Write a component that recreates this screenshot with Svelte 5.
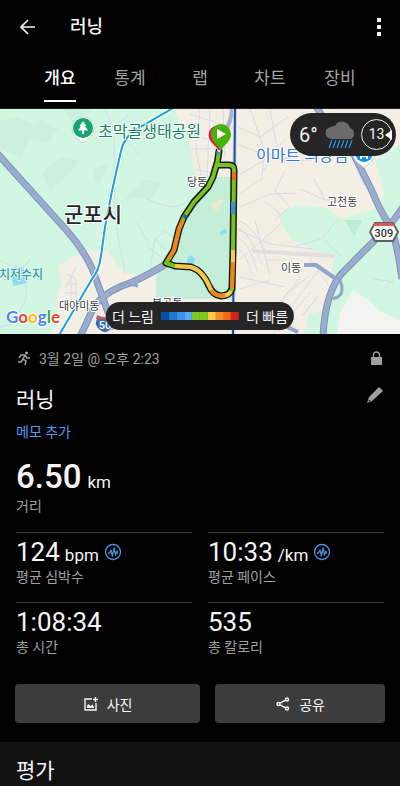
<script lang="ts">
    const tabs = ["개요", "통계", "랩", "차트", "장비"];
    let activeTab = $state("개요");

    const paceScale = [
        "#0a4ea2",
        "#1f78d6",
        "#3b93ee",
        "#59a9fb",
        "#7dc81f",
        "#7dc81f",
        "#fbc94b",
        "#f98b27",
        "#ee6b11",
        "#d32222",
    ];

    const stats = [
        { value: "124", unit: "bpm", label: "평균 심박수", insight: true },
        { value: "10:33", unit: "/km", label: "평균 페이스", insight: true },
        { value: "1:08:34", unit: "", label: "총 시간", insight: false },
        { value: "535", unit: "", label: "총 칼로리", insight: false },
    ];

    const route =
        "M219 42 L217 56 H229 Q234 56 234 61 L233 140 L232 180 Q229 187 221 187 Q213 186 209 177 Q203 162 191 158 L175 157 L166 154 L174 141 L179 120 L184 108 L194 93 L208 78 L213 68 L217 54";

    // Stretches of the route that were run faster or slower than average.
    const paceSegments = [
        { d: "M234 63 V71", color: "#ee6b11" },
        { d: "M233 93 V105", color: "#3b8be0" },
        { d: "M233 141 V153", color: "#fbc94b" },
        { d: "M233 153 L232 179", color: "#f5821f" },
        { d: "M231 182 Q229 187 221 187", color: "#fbc94b" },
        { d: "M225 186 Q215 188 211 181", color: "#f5821f" },
        { d: "M211 181 Q204 162 191 158 L175 157", color: "#fbc151" },
        { d: "M169 150 L174 141 L179 120 L183 111", color: "#f5821f" },
        { d: "M184 109 L186 106", color: "#1f5fa8" },
        { d: "M219 41 L218 45", color: "#3b8be0" },
    ];

    const highways = [
        "M-4 43 L60 114 Q88 144 96 170 L114 220",
        "M166 155 Q140 171 122 177 Q100 186 92 202 L80 228",
        "M315 -4 L328 16 L352 42 L372 82 Q380 102 390 117 Q397 132 402 170",
        "M404 97 L390 116 Q376 130 366 140 L342 164 Q325 184 323 228",
    ];

    const streets = [
        "M105 0 L113 18 L128 7 M113 18 L122 27 L140 46 M114 22 L115 110 L125 165",
        "M0 152 L22 160 L30 150 M25 160 L26 190 L18 205 L5 214 M76 158 L66 178 M67 165 L76 170 L76 198 M71 165 V198 M66 175 H77 M65 184 H78",
        "M190 5 L235 20 M185 25 L230 35 M190 40 H216 M195 60 L212 64 M197 73 L211 76 M200 0 L196 42 L205 84 M210 0 L207 68 M223 0 L225 48",
        "M142 86 L154 94 L174 98 L186 94 M150 160 L155 130 L165 122 L175 130 M148 138 L164 150 M154 129 L167 143 M136 113 L150 136",
        "M238 18 L260 28 L288 8 M238 35 L270 48 L310 52 L326 43 M250 0 L264 40 L262 70 L240 84 M270 0 L278 45 M240 65 L263 52 L286 30 M240 98 L270 85 L297 84",
        "M285 62 L275 81 L290 98 L274 112 M237 120 L270 135 L312 140 M240 150 L264 130 L282 113 M255 112 L270 165 M240 168 L285 178 M239 205 L280 222",
        "M300 80 L325 91 L350 89 M314 70 L325 91 M265 92 L280 105 M270 51 L262 64 M338 111 L321 130 L296 137 M323 130 L341 147 M374 170 L393 173 M383 181 L396 168",
        "M291 150 L300 169 L277 198 M268 221 L286 185 L309 167 M273 225 L311 183 M290 199 L321 158 M302 207 L319 186 M309 149 L330 178 M266 151 H286",
        "M239 112 Q252 115 267 145 M239 120 Q250 124 262 155 M239 130 Q250 135 257 162 M239 140 Q246 145 252 165 M239 180 L270 171",
    ];
</script>

<div class="screen">
    <header>
        <button class="icon-button" aria-label="뒤로">
            <svg width="18" height="18" viewBox="0 0 18 18">
                <path
                    d="M10 2 3 9l7 7M3 9H17"
                    fill="none"
                    stroke="currentColor"
                    stroke-width="1.7"
                />
            </svg>
        </button>
        <h1>러닝</h1>
        <button class="icon-button" aria-label="더보기">
            <svg width="18" height="20" viewBox="0 0 18 20">
                <path
                    d="M7 1h4v4H7zM7 8h4v4H7zM7 15h4v4H7z"
                    fill="currentColor"
                />
            </svg>
        </button>
    </header>

    <nav>
        {#each tabs as tab (tab)}
            <button
                class:active={activeTab === tab}
                onclick={() => (activeTab = tab)}
            >
                <span>{tab}</span>
            </button>
        {/each}
    </nav>

    <section class="map">
        <svg class="map-canvas" viewBox="0 0 400 225">
            <rect width="400" height="225" fill="#f4efe4" />

            <!-- Woodland and parks -->
            <path
                d="M0 0H174L181 15 190 34 194 62 203 84 184 108 174 140 165 154 140 166 123 163 108 142 91 141 70 149 57 158 62 174 55 192 59 210 50 225H0z"
                fill="#d1f6e1"
            />
            <path
                d="M0 12 18 8 35 16 42 10 58 20 48 34 30 29 22 48 0 40zM62 0 92 1 74 14zM42 64 62 48 80 52 67 66 50 82zM92 61 108 54 98 78zM124 90 145 70 162 74 150 91 136 89z"
                fill="#cbf1dc"
            />
            <path
                d="M208 81 217 68 H233V190H156V170L158 157 166 154 175 139 185 108z"
                fill="#c3efd9"
            />
            <path
                d="M278 106 295 96 325 98 342 110 376 100 385 86 375 51 400 35V225H304L309 206 325 200 333 186 330 166 335 147 312 141 291 130z"
                fill="#d1f6e1"
            />
            <path d="M345 111 362 111 354 128z" fill="#bdebd3" />
            <path d="M353 181 370 192 380 202 400 211V225H337L340 204z" fill="#f3f3f2" />
            <path d="M211 95 225 89 216 103z" fill="#f5e3c5" />
            <path
                d="M11 159 22 158 27 163V174L13 177zM220 123l6-4 1 5-6 2zM187 150l4-4 4 4-1 7-7-1z"
                fill="#8edcf1"
            />

            <g fill="none" stroke="#d7dce6" stroke-width="1">
                {#each streets as d}
                    <path {d} />
                {/each}
            </g>
            <path
                d="M252 142 L335 147"
                fill="none"
                stroke="#e2dedd"
                stroke-width="4"
            />
            <path
                d="M352 47 L364 76 M0 218 L25 211"
                fill="none"
                stroke="#a9e2ec"
                stroke-width="1"
            />

            <g fill="none" stroke="#7e91b7" stroke-width="7">
                {#each highways as d}
                    <path {d} />
                {/each}
            </g>
            <g fill="none" stroke="#9aadcf" stroke-width="5">
                {#each highways as d}
                    <path {d} />
                {/each}
            </g>
            <g fill="none" stroke="#91a5cb" stroke-width="4">
                <path d="M304 156 H316 L336 170" />
                <path
                    d="M338 168 Q344 176 341 185 Q337 190 332 189"
                    stroke-width="3"
                />
                <path d="M116 180 L126 174 L138 177" stroke-width="3" />
                <path d="M232 0 Q231 14 224 24" stroke="#a5b3ce" />
                <path d="M276 213 L298 223" />
            </g>

            <!-- Railways -->
            <path
                d="M173 -1 L142 17 Q125 25 121 42 L112 82 L105 118 L101 147 Q99 162 92 170 L58 228"
                fill="none"
                stroke="#ffffff"
                stroke-width="4"
            />
            <path
                d="M173 -1 L142 17 Q125 25 121 42 L112 82 L105 118 L101 147 Q99 162 92 170 L58 228"
                fill="none"
                stroke="#209fd8"
                stroke-width="2"
            />
            <path
                d="M235 0 L233 225"
                fill="none"
                stroke="#cbd9ef"
                stroke-width="4"
            />
            <path
                d="M235 0 L233 225"
                fill="none"
                stroke="#1f4ca3"
                stroke-width="2"
            />

            <g class="label">
                <text x="98" y="28" class="park">초막골생태공원</text>
                <text x="256" y="52" class="shop">이마트 의왕점</text>
                <text x="64" y="113" class="city">군포시</text>
                <text x="187" y="77">당동</text>
                <text x="327" y="97">고천동</text>
                <text x="281" y="163">이동</text>
                <text x="59" y="201">대야미동</text>
                <text x="152" y="198">부곡동</text>
                <text x="-1" y="170" class="lake">치저수지</text>
            </g>

            <!-- Park pin -->
            <path
                d="M83 34C80 31 72 28 72 19a11 11 0 0 1 22 0C94 28 86 31 83 34z"
                fill="#ffffff"
                stroke="#d0d7d3"
                stroke-width="1"
            />
            <circle cx="83" cy="19" r="10" fill="#16a571" />
            <path
                d="M83 12l3.500 5h-1.500l3 4.500H84V25h-2v-3.500h-4l3-4.500h-1.500z"
                fill="#ffffff"
            />

            <!-- Shop pin -->
            <path
                d="M364 59C361 55 353 53 353 44a11 11 0 0 1 22 0C375 53 367 55 364 59z"
                fill="#ffffff"
                stroke="#cdd3da"
                stroke-width="1"
            />
            <circle cx="364" cy="44" r="9" fill="#0b90f4" />
            <path d="M360 46h8v4h-2v-2h-4v2h-2z" fill="#ffffff" />

            <!-- Road shields -->
            <path
                d="M375 114H393L398 123 393 132H375L370 123z"
                fill="#ffffff"
                stroke="#5d6066"
                stroke-width="2"
                stroke-linejoin="round"
            />
            <path d="M375 114H393L395 117H373z" fill="#dd5b5b" />
            <text x="384" y="128" class="shield">309</text>
            <path
                d="M97 207Q105 210 112 207L114 215Q112 222 105 224 98 222 95 215z"
                fill="#3c6fb4"
                stroke="#ffffff"
                stroke-width="1"
            />
            <path d="M97 206Q105 210 112 206L113 210H96z" fill="#d95757" />
            <text x="105" y="220" class="shield light">50</text>

            <g fill="none" stroke-linejoin="round">
                <path
                    d={route}
                    stroke="#151a10"
                    stroke-width="7"
                    stroke-linecap="round"
                />
                <path d={route} stroke="#79c321" stroke-width="4" />
                {#each paceSegments as segment}
                    <path
                        d={segment.d}
                        stroke={segment.color}
                        stroke-width="4"
                    />
                {/each}
            </g>

            <!-- Finish and start pins -->
            <path
                d="M219 43C216 36 208 34 208 26a10 10 0 0 1 20 0C228 34 222 36 219 43z"
                fill="#e51c3d"
                stroke="#ffffff"
                stroke-width="1"
            />
            <path
                d="M221 42C218 35 211 33 211 25a10 10 0 0 1 20 0C231 33 224 35 221 42z"
                fill="#45b30c"
            />
            <path d="M217 20v10l9-5z" fill="#ffffff" />

            <text x="6" y="214" class="google"
                ><tspan fill="#4285f4">G</tspan><tspan fill="#ea4335">o</tspan
                ><tspan fill="#fbbc05">o</tspan><tspan fill="#4285f4">g</tspan
                ><tspan fill="#34a853">l</tspan><tspan fill="#ea4335">e</tspan
                ></text
            >
        </svg>

        <div class="weather">
            <span class="temperature">6°</span>
            <svg width="32" height="30" viewBox="0 0 32 30">
                <path
                    d="M7 19a6 6 0 0 1-1-12 5 5 0 0 1 4-1 8 8 0 0 1 15 2 6 6 0 0 1 1 11z"
                    fill="#6a6a6a"
                />
                <path
                    d="M7 20l-3 8M11 20l-3 8M15 20l-3 8M19 20l-3 8M23 20l-3 8M27 20l-3 8"
                    fill="none"
                    stroke="#3183d8"
                    stroke-width="1.400"
                />
            </svg>
            <span class="wind">13</span>
        </div>

        <div class="legend">
            <span>더 느림</span>
            <div class="scale">
                {#each paceScale as color}
                    <i style:background={color}></i>
                {/each}
            </div>
            <span>더 빠름</span>
        </div>
    </section>

    <main>
        <div class="row date">
            <svg width="16" height="16" viewBox="0 0 16 16">
                <circle cx="10.500" cy="3" r="1.600" fill="currentColor" />
                <path
                    d="M9 5L7 9l3 2-1 4M7 9l-2 3H2M9 5L5 5 3 8M9 5l2 3h3"
                    fill="none"
                    stroke="currentColor"
                    stroke-width="1.500"
                />
            </svg>
            <span>3월 2일 @ 오후 2:23</span>
            <svg class="end" width="16" height="16" viewBox="0 0 16 16">
                <path d="M3 7h11v8H3z" fill="currentColor" />
                <path
                    d="M5.500 7V5a3 3 0 0 1 6 0v2"
                    fill="none"
                    stroke="currentColor"
                    stroke-width="1.300"
                />
            </svg>
        </div>

        <div class="row title">
            <h2>러닝</h2>
            <button class="edit" aria-label="이름 편집">
                <svg width="18" height="18" viewBox="0 0 18 18">
                    <path
                        d="M13 1l4 4L6 15l-5 2 2-6zM3 13.500L2.500 15.500 4.500 15z"
                        fill="currentColor"
                        fill-rule="evenodd"
                    />
                </svg>
            </button>
        </div>

        <a class="memo" href="#memo">메모 추가</a>

        <div class="distance">
            <p class="value">6.50 <small>km</small></p>
            <p class="caption">거리</p>
        </div>

        <div class="stats">
            {#each stats as stat (stat.label)}
                <div class="stat">
                    <p class="value">
                        {stat.value}
                        {#if stat.unit}
                            <small>{stat.unit}</small>
                        {/if}
                        {#if stat.insight}
                            <svg width="18" height="18" viewBox="0 0 18 18">
                                <g
                                    fill="none"
                                    stroke="currentColor"
                                    stroke-width="1.300"
                                    stroke-linejoin="round"
                                >
                                    <circle cx="9" cy="9" r="7.500" />
                                    <path
                                        d="M4 10h1.500L7 7l1.500 6L10 5l1.500 7L13 8l.5 2H14"
                                    />
                                </g>
                            </svg>
                        {/if}
                    </p>
                    <p class="caption">{stat.label}</p>
                </div>
            {/each}
        </div>

        <div class="actions">
            <button class="photo">
                <svg width="16" height="16" viewBox="0 0 16 16">
                    <path
                        d="M9 3H2v11h11V7M12.500 1v5M10 3.500h5"
                        fill="none"
                        stroke="currentColor"
                        stroke-width="1.400"
                    />
                    <path d="M4 12V9.500l1.500-1.500 2 2L9.500 8.500 11.500 12z" fill="currentColor" />
                </svg>
                사진
            </button>
            <button class="share">
                <svg width="16" height="16" viewBox="0 0 16 16">
                    <g fill="none" stroke="currentColor" stroke-width="1.400">
                        <circle cx="3.500" cy="8" r="1.500" />
                        <circle cx="12" cy="3.500" r="1.500" />
                        <circle cx="12" cy="12.500" r="1.500" />
                        <path d="M5 7.200L10.500 4.200M5 8.800l5.500 3" />
                    </g>
                </svg>
                공유
            </button>
        </div>
    </main>

    <section class="rating">
        <h2>평가</h2>
    </section>
</div>

<style>
    :global(body) {
        margin: 0;
        background: #000;
    }

    .screen {
        color: #f5f5f5;
        font-family: Roboto, "Noto Sans CJK KR", sans-serif;
        font-size: 14px;
    }

    h1,
    h2,
    p {
        margin: 0;
        font-weight: 400;
    }

    button {
        padding: 0;
        border: 0;
        background: none;
        color: inherit;
        font: inherit;
        cursor: pointer;
    }

    svg {
        display: block;
        flex: none;
    }

    header {
        display: flex;
        align-items: center;
        height: 54px;
        padding: 0 12px;
    }
    header h1 {
        flex: 1;
        margin-left: 28px;
        font-size: 18px;
        font-weight: 500;
        line-height: 26px;
    }

    .icon-button {
        display: grid;
        place-items: center;
        width: 30px;
        height: 40px;
    }
    header .icon-button:last-child {
        margin-right: -6px;
    }

    nav {
        display: grid;
        grid-template-columns: repeat(5, 1fr);
        height: 54px;
        padding: 0 25px;
        border-bottom: 1px solid #1c1a1c;
    }
    nav button {
        height: 48px;
        color: #a3a3a3;
        font-size: 17px;
        line-height: 47px;
    }
    nav span {
        display: inline-block;
        height: 45px;
        border-bottom: 2px solid transparent;
    }
    nav .active {
        color: #fff;
        font-weight: 500;
    }
    nav .active span {
        border-color: #fff;
    }

    .map {
        position: relative;
    }
    .map-canvas {
        width: 100%;
        height: auto;
    }

    .label text {
        fill: #3b3c40;
        stroke: #fff;
        stroke-width: 2px;
        stroke-linejoin: round;
        paint-order: stroke;
        font-size: 11px;
    }
    .label .park {
        fill: #168260;
        font-size: 16px;
    }
    .label .shop {
        fill: #2f78d8;
        font-size: 16px;
    }
    .label .city {
        fill: #24262a;
        font-size: 21px;
        font-weight: 500;
    }
    .label .lake {
        fill: #168a9a;
        stroke: #d8f6ec;
        font-size: 12px;
    }

    .shield {
        fill: #333;
        font-size: 11px;
        font-weight: 500;
        text-anchor: middle;
    }
    .shield.light {
        fill: #fff;
    }

    .google {
        stroke: #fff;
        stroke-width: 2px;
        paint-order: stroke;
        font-family: Lato, sans-serif;
        font-size: 17px;
        font-weight: 700;
    }

    .weather {
        position: absolute;
        top: 4px;
        right: 4px;
        display: flex;
        align-items: center;
        gap: 4px;
        box-sizing: border-box;
        height: 43px;
        padding: 0 4px 0 9px;
        border-radius: 22px;
        background: #252525;
    }
    .temperature {
        width: 22px;
        font-size: 20px;
    }
    .wind {
        position: relative;
        box-sizing: border-box;
        width: 31px;
        height: 31px;
        border: 1px solid #eee;
        border-radius: 50%;
        line-height: 29px;
        text-align: center;
    }
    .wind::after {
        content: "";
        position: absolute;
        top: 10px;
        right: -1px;
        border: 5px solid transparent;
        border-right: 7px solid #fff;
        border-left: 0;
    }

    .legend {
        position: absolute;
        bottom: 4px;
        left: 50%;
        display: flex;
        align-items: center;
        gap: 7px;
        height: 28px;
        padding: 0 6px;
        border-radius: 14px;
        background: #252525;
        white-space: nowrap;
        transform: translateX(-50%);
    }
    .scale {
        display: flex;
        width: 78px;
        height: 8px;
    }
    .scale i {
        flex: 1;
    }

    main {
        padding: 12px 16px 19px;
    }

    .row {
        display: flex;
        align-items: center;
    }

    .date {
        gap: 7px;
        height: 24px;
        color: #a0a0a0;
    }
    .end {
        margin-left: auto;
    }

    .title {
        justify-content: space-between;
        height: 32px;
        margin-top: 14px;
    }
    h2 {
        font-size: 21px;
        line-height: 30px;
    }
    .edit {
        align-self: flex-start;
        padding-top: 2px;
        color: #a0a0a0;
    }

    .memo {
        display: block;
        width: fit-content;
        margin-top: 4px;
        color: #4d9df0;
        line-height: 24px;
        text-decoration: none;
    }

    .caption {
        color: #a0a0a0;
        line-height: 20px;
    }
    .value {
        display: flex;
        align-items: baseline;
        gap: 6px;
    }
    .value small {
        font-size: 17px;
        font-weight: 400;
        line-height: 20px;
    }
    .value svg {
        align-self: center;
        color: #4b93df;
    }

    .distance {
        margin-top: 14px;
    }
    .distance .value {
        font-size: 33px;
        font-weight: 500;
        line-height: 38px;
    }

    .stats {
        display: grid;
        grid-template-columns: 1fr 1fr;
        column-gap: 16px;
        margin-top: 16px;
    }
    .stat {
        box-sizing: border-box;
        height: 70px;
        padding-top: 4px;
        border-top: 1px solid #3a3a3a;
    }
    .stat .value {
        gap: 5px;
        font-size: 26px;
        line-height: 30px;
    }

    .actions {
        display: flex;
        gap: 15px;
        margin: 12px -1px 0;
    }
    .actions button {
        display: flex;
        justify-content: center;
        align-items: center;
        gap: 8px;
        height: 39px;
        border-radius: 4px;
        background: #3c3c3c;
    }
    .photo {
        flex: 12;
    }
    .share {
        flex: 11;
    }

    .rating {
        padding: 14px 16px 0;
        background: #111;
    }
</style>
